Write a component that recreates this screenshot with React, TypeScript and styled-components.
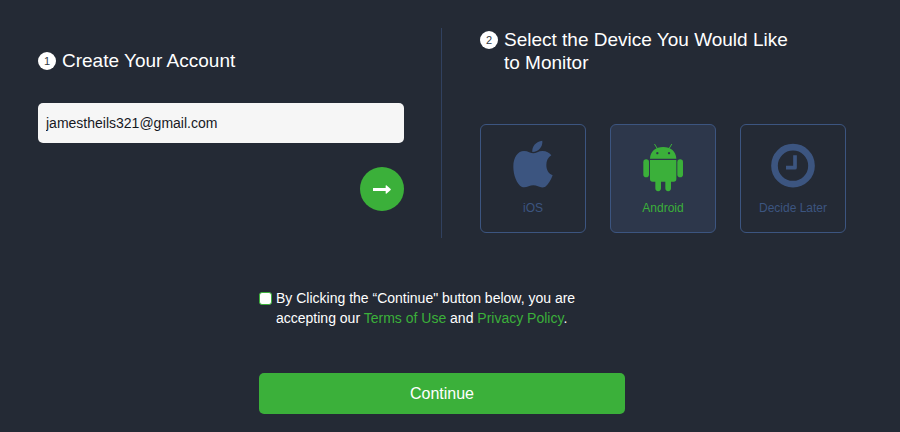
import React, { useState } from "react";
import styled, { createGlobalStyle } from "styled-components";

const color = {
  page: "#242a35",
  green: "#3bb03a",
  blue: "#3c5580",
  line: "#31415f",
  selected: "#2d374b",
  field: "#f6f6f6",
};

const GlobalStyle = createGlobalStyle`
  *, *::before, *::after { box-sizing: border-box; }
  body {
    margin: 0;
    background: ${color.page};
    color: #fff;
    font-family: "Liberation Sans", Arial, sans-serif;
  }
`;

const Page = styled.main`
  padding: 28px 54px 18px 38px;
`;

const Steps = styled.div`
  display: flex;
`;

const AccountStep = styled.section`
  flex: 1 1 0;
  min-width: 0;
  padding: 21px 37px 27px 0;
`;

const DeviceStep = styled.section`
  flex: 1 1 0;
  min-width: 0;
  padding-left: 38px;
  border-left: 1px solid ${color.line};
`;

const StepHeader = styled.header`
  display: flex;
  gap: 6px;
`;

const StepNumber = styled.span`
  flex: none;
  width: 18px;
  height: 18px;
  margin-top: 3px;
  border-radius: 50%;
  background: #fff;
  color: #333a46;
  font-size: 11px;
  line-height: 18px;
  text-align: center;
`;

const StepTitle = styled.h2`
  margin: 0;
  max-width: 300px;
  font-size: 19px;
  font-weight: 400;
  line-height: 23px;
`;

const EmailInput = styled.input`
  display: block;
  width: 100%;
  height: 40px;
  margin-top: 31px;
  padding: 0 8px;
  border: 0;
  border-radius: 5px;
  background: ${color.field};
  color: #16191f;
  font-family: inherit;
  font-size: 14px;
`;

const NextButton = styled.button`
  display: flex;
  align-items: center;
  justify-content: center;
  width: 44px;
  height: 44px;
  margin: 24px 0 0 auto;
  padding: 0;
  border: 0;
  border-radius: 50%;
  background: ${color.green};
  color: #fff;
  cursor: pointer;
`;

const DeviceList = styled.fieldset`
  display: grid;
  grid-template-columns: repeat(3, 1fr);
  gap: 24px;
  min-width: 0;
  margin: 50px 0 0;
  padding: 0;
  border: 0;
`;

const DeviceCard = styled.label<{ $selected: boolean }>`
  display: flex;
  flex-direction: column;
  align-items: center;
  gap: 10px;
  padding: 15px 0 16px;
  border: 1px solid ${color.blue};
  border-radius: 6px;
  background: ${(p) => (p.$selected ? color.selected : "transparent")};
  color: ${(p) => (p.$selected ? color.green : color.blue)};
  font-size: 12px;
  line-height: 16px;
  cursor: pointer;
`;

const DeviceRadio = styled.input`
  position: absolute;
  width: 1px;
  height: 1px;
  margin: 0;
  opacity: 0;
`;

const Footer = styled.div`
  max-width: 366px;
  margin: 50px auto 0;
`;

const Agreement = styled.div`
  display: flex;
  gap: 4px;
  font-size: 14px;
  line-height: 20px;
`;

const AgreementBox = styled.input`
  appearance: none;
  flex: none;
  width: 13px;
  height: 13px;
  margin: 4px 0 0;
  border: 1px solid ${color.green};
  border-radius: 3px;
  background: #fff;

  &:checked {
    background: ${color.green};
  }
`;

const TextLink = styled.a`
  color: ${color.green};
  text-decoration: none;
`;

const ContinueButton = styled.button`
  display: block;
  width: 100%;
  height: 41px;
  margin-top: 45px;
  border: 0;
  border-radius: 5px;
  background: ${color.green};
  color: #fff;
  font-family: inherit;
  font-size: 16px;
  cursor: pointer;
`;

const ArrowIcon = () => (
  <svg width="18" height="9" viewBox="0 0 54 27" fill="currentColor" aria-hidden="true">
    <path d="M1 9h37V2q0-2 2-1l13 11q1 1.500 0 3L40 26q-2 1-2-1v-7H1q-1 0-1-1v-7q0-1 1-1z" />
  </svg>
);

const AppleIcon = () => (
  <svg width="44" height="50" viewBox="122 75 132 150" fill="currentColor" aria-hidden="true">
    <path d="M186 111C184 94 197 79 216 77C218 94 205 111 186 111Z" />
    <path d="M189 115C197 115 204 108 217 108C228 108 237 113 243 121C233 127 228 138 228 150C228 165 235 176 247 181C242 196 233 209 225 215C212 222 202 211 189 211C177 211 167 220 155 216C139 207 129 179 129 155C129 126 143 108 161 108C173 108 181 115 189 115Z" />
  </svg>
);

const AndroidIcon = () => (
  <svg width="44" height="50" viewBox="122 75 132 150" fill="currentColor" overflow="visible" aria-hidden="true">
    <path d="M163 88l8 13M214 88l-8 13" stroke="currentColor" strokeWidth="3" strokeLinecap="round" />
    <path
      fillRule="evenodd"
      d="M149 131C150 109 166 96 188.500 96S227 109 228 131ZM171 111a3.500 3.500 0 1 0 .1 0zM206 111a3.500 3.500 0 1 0 .1 0z"
    />
    <path d="M149 135H228V192Q228 200 220 200H212V220A8.500 8.500 0 0 1 195 220V200H182V220A8.500 8.500 0 0 1 165 220V200H157Q149 200 149 192Z" />
    <rect x="129" y="133" width="17" height="54" rx="8.500" />
    <rect x="231" y="133" width="17" height="54" rx="8.500" />
  </svg>
);

const ClockIcon = () => (
  <svg width="44" height="50" viewBox="122 75 132 150" fill="none" stroke="currentColor" aria-hidden="true">
    <circle cx="188" cy="152" r="55.500" strokeWidth="20" />
    <path d="M194 121V158H167" strokeWidth="11" strokeLinejoin="round" />
  </svg>
);

const devices = [
  { id: "ios", label: "iOS", Icon: AppleIcon },
  { id: "android", label: "Android", Icon: AndroidIcon },
  { id: "later", label: "Decide Later", Icon: ClockIcon },
];

export default function App() {
  const [email, setEmail] = useState("jamestheils321@gmail.com");
  const [device, setDevice] = useState("android");

  return (
    <>
      <GlobalStyle />
      <Page>
        <Steps>
          <AccountStep>
            <StepHeader>
              <StepNumber>1</StepNumber>
              <StepTitle>Create Your Account</StepTitle>
            </StepHeader>
            <EmailInput
              type="email"
              aria-label="Email address"
              value={email}
              onChange={(e) => setEmail(e.target.value)}
            />
            <NextButton type="button" aria-label="Next">
              <ArrowIcon />
            </NextButton>
          </AccountStep>
          <DeviceStep>
            <StepHeader>
              <StepNumber>2</StepNumber>
              <StepTitle id="device-title">Select the Device You Would Like to Monitor</StepTitle>
            </StepHeader>
            <DeviceList aria-labelledby="device-title">
              {devices.map(({ id, label, Icon }) => (
                <DeviceCard key={id} $selected={device === id}>
                  <DeviceRadio
                    type="radio"
                    name="device"
                    value={id}
                    checked={device === id}
                    onChange={() => setDevice(id)}
                  />
                  <Icon />
                  {label}
                </DeviceCard>
              ))}
            </DeviceList>
          </DeviceStep>
        </Steps>
        <Footer>
          <Agreement>
            <AgreementBox type="checkbox" id="agree" />
            <label htmlFor="agree">
              By Clicking the “Continue" button below, you are
              <br />
              accepting our <TextLink href="#terms">Terms of Use</TextLink> and{" "}
              <TextLink href="#privacy">Privacy Policy</TextLink>.
            </label>
          </Agreement>
          <ContinueButton type="button">Continue</ContinueButton>
        </Footer>
      </Page>
    </>
  );
}
